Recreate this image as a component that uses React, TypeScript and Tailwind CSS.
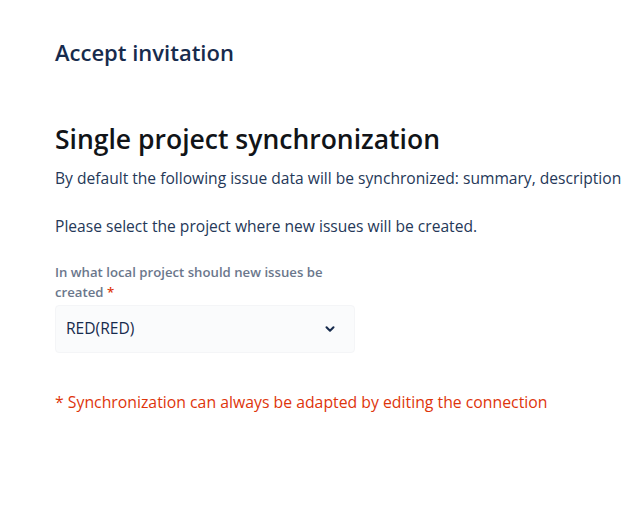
import { ChevronDown } from 'lucide-react'

export default function App() {
  return (
    <div className="w-[624px] h-[507px] overflow-hidden bg-white font-['Open_Sans',sans-serif]">
      <div className="pl-[55px] pt-[38px]">
        <h1 className="text-[22px] leading-[28px] font-semibold text-[#172b4d] whitespace-nowrap">Accept invitation</h1>

        <h2 className="mt-[57px] text-[26.5px] leading-[32px] font-semibold text-[#111418] whitespace-nowrap">Single project synchronization</h2>
        <p className="mt-[13px] text-[15.6px] leading-[20px] text-[#253858] whitespace-nowrap">
          By default the following issue data will be synchronized: summary, description
        </p>

        <p className="mt-[28px] text-[15.6px] leading-[20px] text-[#253858] whitespace-nowrap">
          Please select the project where new issues will be created.
        </p>

        <div className="mt-[26px] w-[300px]">
          <p className="text-[13.2px] leading-[20px] font-semibold text-[#6b778c] pr-[20px]">
            In what local project should new issues be created <span className="text-[#de350b]">*</span>
          </p>
          <div className="mt-[3px] h-[48px] flex items-center justify-between pl-[10px] pr-[17px] rounded-[4px] bg-[#fafbfc] border border-[#f4f5f7]">
            <span className="text-[15.6px] text-[#172b4d]">RED(RED)</span>
            <ChevronDown size={14} strokeWidth={3.5} className="text-[#172b4d]" />
          </div>
        </div>

        <p className="mt-[39px] text-[15.8px] leading-[20px] text-[#de350b] whitespace-nowrap">
          * Synchronization can always be adapted by editing the connection
        </p>
      </div>
    </div>
  )
}
